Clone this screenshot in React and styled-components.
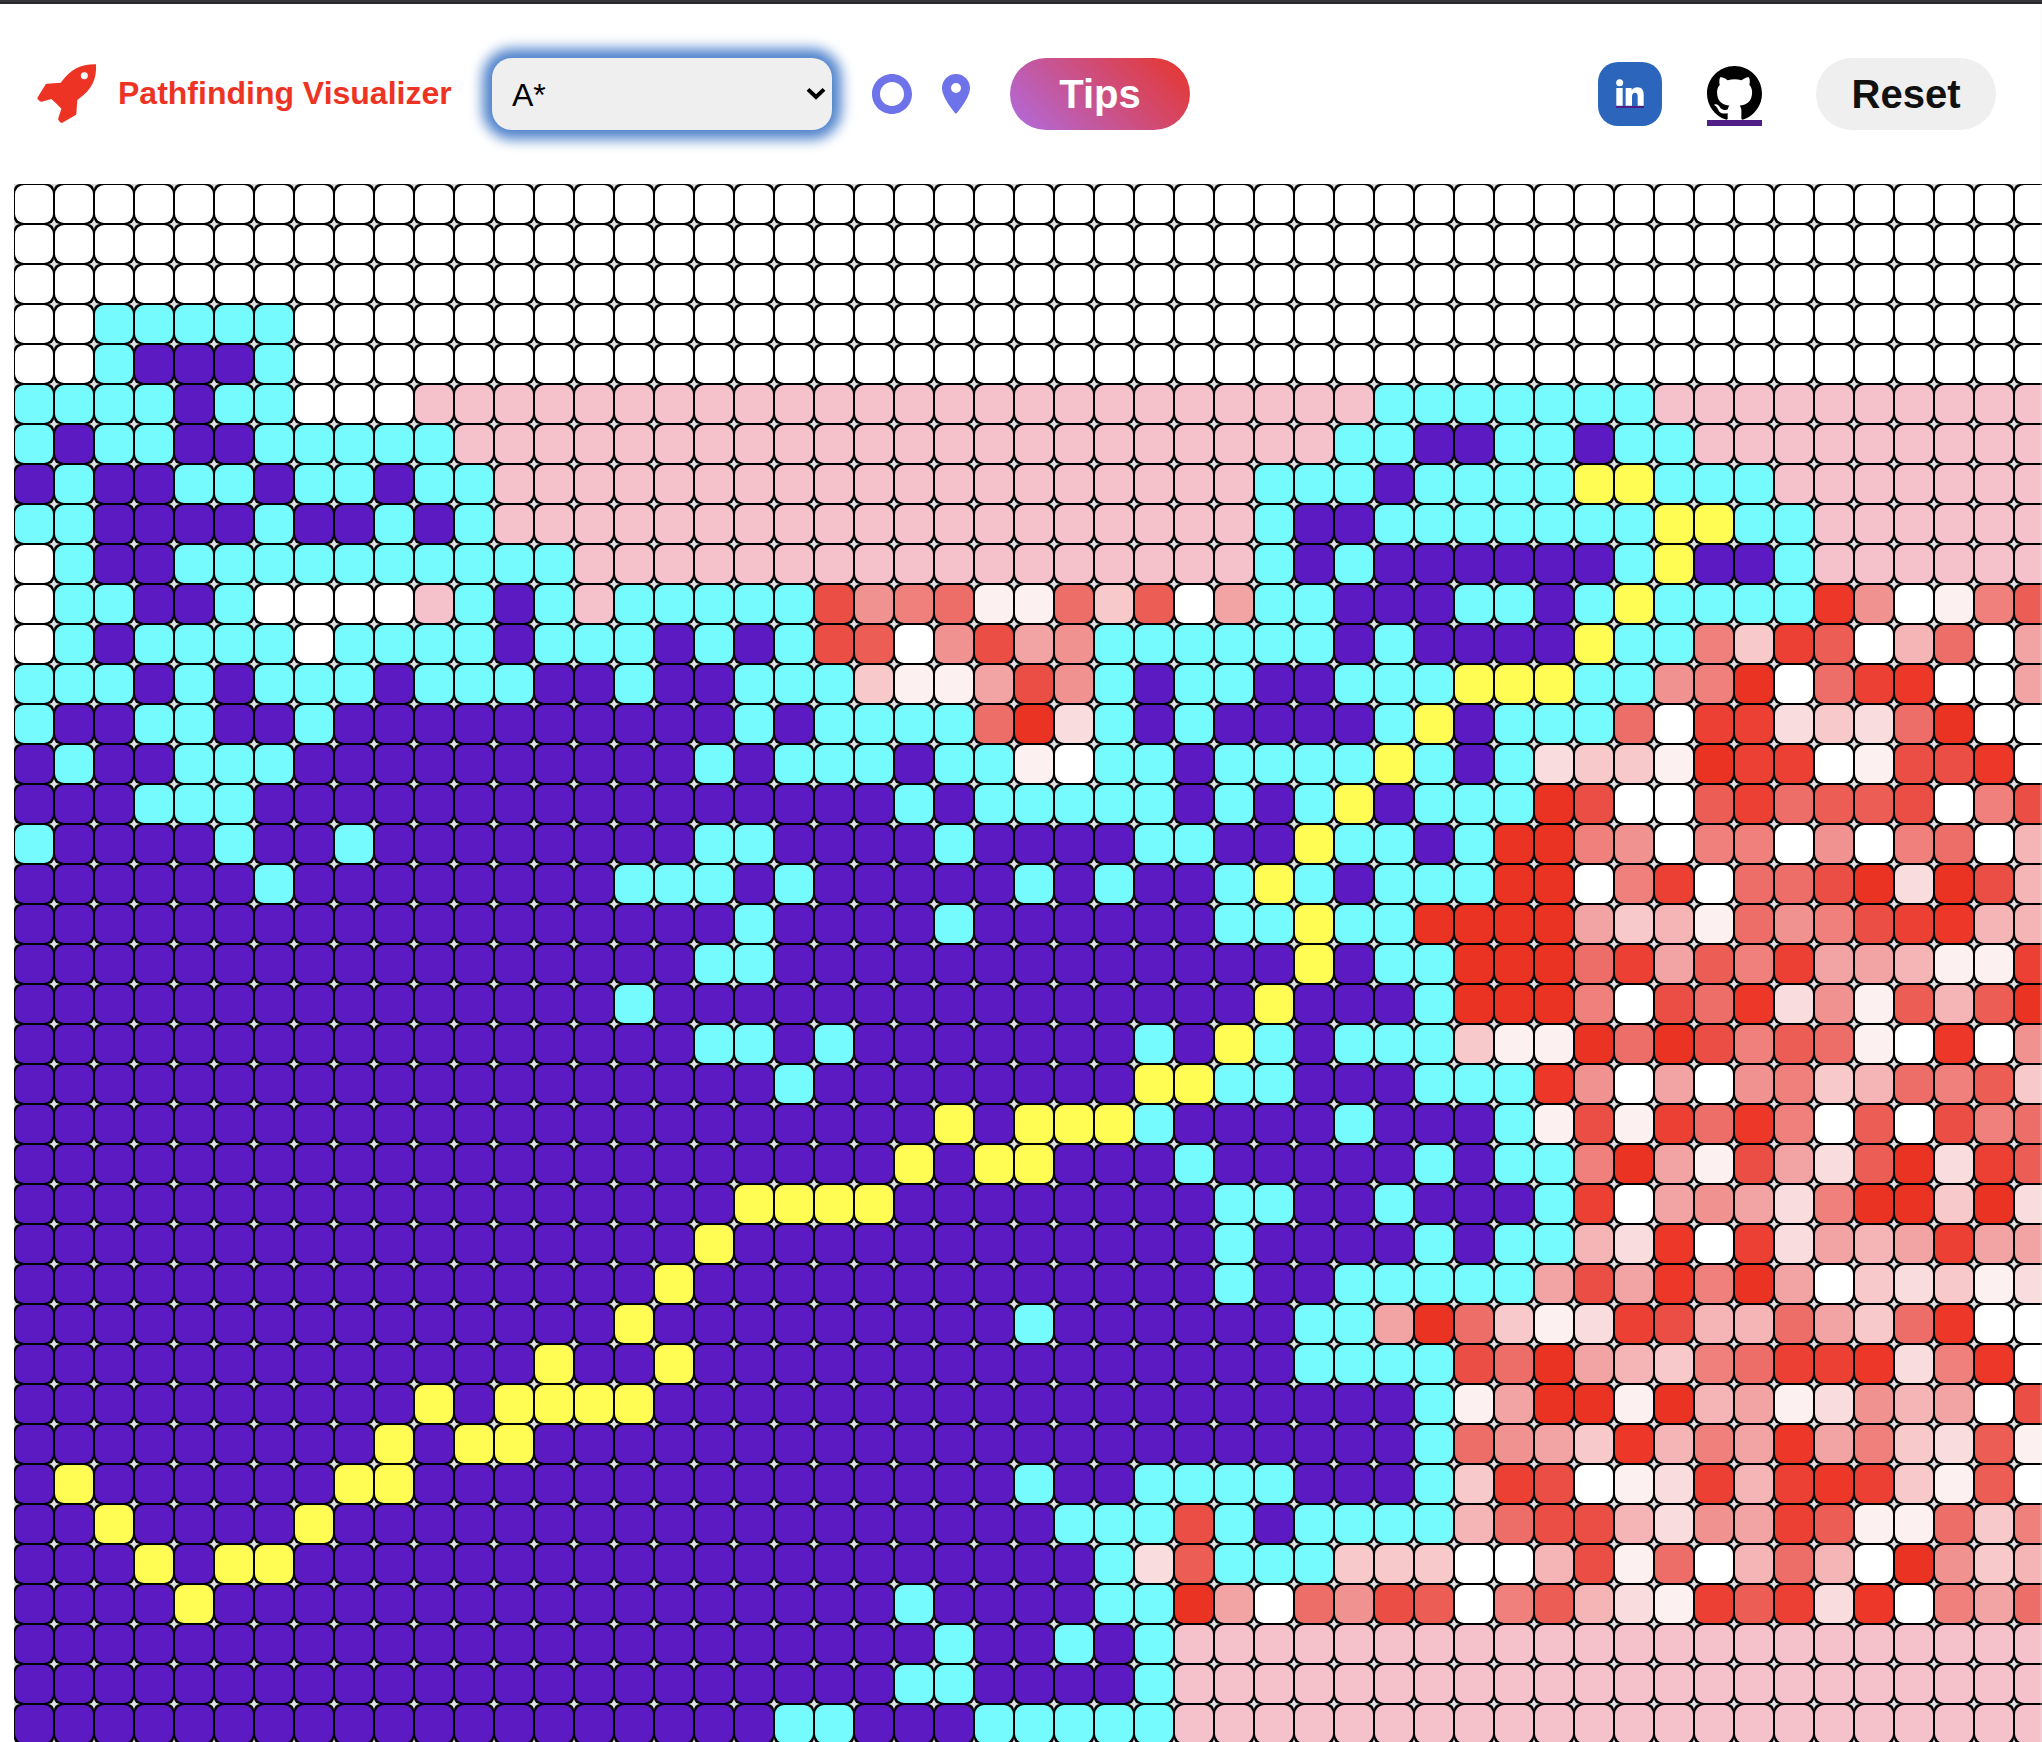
import React from "react";
import styled, { createGlobalStyle } from "styled-components";
import { BsGithub } from "react-icons/bs";
import { MdLocationOn, MdTripOrigin } from "react-icons/md";

const GlobalStyle = createGlobalStyle`
  * { box-sizing: border-box; }
  html, body { margin: 0; padding: 0; background: #ffffff; overflow: hidden; }
  body { font-family: "Liberation Sans", Arial, Helvetica, sans-serif; }
`;

const Page = styled.div`
  width: 100vw;
  height: 100vh;
  overflow: hidden;
  background: #ffffff;
`;

const TopEdge = styled.div`
  height: 4px;
  background: #37343b;
  border-bottom: 2px solid #29282c;
`;

const Header = styled.header`
  height: 180px;
  padding: 0 46px 0 37px;
  display: flex;
  align-items: center;
`;

const Brand = styled.div`
  display: flex;
  align-items: center;
  gap: 21px;
  color: #ed3424;
`;

const Title = styled.h1`
  margin: 0;
  width: 334px;
  padding-bottom: 2px;
  font-size: 32px;
  line-height: 36px;
  font-weight: 700;
  white-space: nowrap;
`;

const SelectBox = styled.div`
  width: 340px;
  height: 72px;
  margin-left: 40px;
  padding: 0 6px 0 20px;
  display: flex;
  align-items: center;
  background: #efefef;
  border-radius: 20px;
  box-shadow: 0 0 13px 9.5px #5083cc;
`;

const AlgorithmSelect = styled.select`
  flex: 1;
  height: 72px;
  padding: 1px 0 0;
  border: 0;
  outline: 0;
  appearance: none;
  background: transparent;
  color: #000000;
  font-family: inherit;
  font-size: 32px;
`;

const Tools = styled.div`
  display: flex;
  gap: 16px;
  margin: 0 30px 0 36px;
  color: #6f73ea;
  font-size: 48px;

  svg { display: block; }
`;

const PillButton = styled.button`
  width: 180px;
  height: 72px;
  padding: 0;
  border: 0;
  border-radius: 36px;
  background: ${(p) => p.$background};
  color: ${(p) => p.$color};
  font-family: inherit;
  font-size: 40px;
  font-weight: 700;
`;

const Actions = styled.div`
  margin-left: auto;
  display: flex;
  align-items: center;
`;

const LinkedInLink = styled.a`
  width: 64px;
  height: 64px;
  margin-right: 44.5px;
  display: flex;
  align-items: center;
  justify-content: center;
  border-radius: 20px;
  background: #2b66bc;
  color: #ffffff;

  span {
    display: block;
    height: 29px;
    margin-bottom: 1px;
    border-bottom: 2px solid #4f1f87;
  }

  svg { display: block; }
`;

const GithubLink = styled.a`
  width: 55px;
  height: 60px;
  margin: 4px 54.5px 0 0;
  border-bottom: 6px solid #4f1f87;
  color: #000000;

  svg { display: block; width: 55px; height: 55px; }
`;

const Board = styled.main`
  margin-left: 14px;
  height: 1558px;
  overflow: hidden;
  background: #e0dfe3;
`;

const Row = styled.div`
  display: flex;
  width: 2040px;
  height: 40px;
`;

const Cell = styled.div`
  width: 40px;
  height: 40px;
  padding: 1px;
  border-radius: 6px;
  background: #000000;

  &::before {
    content: "";
    display: block;
    height: 100%;
    border-radius: 9px;
    background: ${(p) => p.$fill};
  }
`;

const RightEdge = styled.div`
  position: fixed;
  top: 4px;
  right: 0;
  width: 2px;
  height: 100%;
  background: rgba(245, 245, 245, 0.25);
`;

const FILLS = {
  v: "#5b1ac2",
  c: "#75fbfd",
  y: "#fffd54",
  p: "#f5c2cb",
  0: "#ffffff",
  1: "#fcf0f0",
  2: "#f9dcdd",
  3: "#f7c9ca",
  4: "#f5b5b6",
  5: "#f2a3a3",
  6: "#f09290",
  7: "#ef807b",
  8: "#ed6e68",
  9: "#ec5d56",
  A: "#eb4e45",
  B: "#ec4035",
  C: "#ec3729",
  D: "#eb3323",
};

// Each row is a list of tokens: plain cell codes, or "code*count" for a run.
const ROWS = [
  "0*51",
  "0*51",
  "0*51",
  "00 c*5 0*44",
  "00cvvvc 0*44",
  "ccccvcc000 p*24 c*7 p*10",
  "cvccvvccccc p*22 ccvvccvcc p*9",
  "vcvvccvccvcc p*19 cccvccccyyccc p*7",
  "ccvvvvcvvcvc p*19 cvvcccccccyycc p*6",
  "0cvv c*10 p*17 cvcvvvvvvcyvvc p*6",
  "0ccvvc0000pcvcpccccc A6781183905 ccvvvccvcyccccC60179",
  "0cvcccc0ccccvcccvcvc A906A56 ccccccvcvvvvycc73B904805",
  "cccvcvcccvcccvvcvvccc 3115A6 cvccvvcccyyycc 67D08BC005",
  "cvvccvvc v*10 cv cccc 8D2 cvc vvvv cyvccc 80BB2328D00",
  "vcvvccc v*10 cvcccvcc 10 cc v cccc ycvc 2331DBB01AAC0",
  "vvvccc v*16 cv ccccc vcvcyv ccc DA009B899A07A",
  "cvvvvcvvc v*8 cc vvvv c vvvv cc vv y cc vc DD760770607804",
  "vvvvvvc v*8 cccvc vvvvv cvc vv cycv ccc DD07B088AD2DA4",
  "v*18 c vvvv c v*6 cc y cc DDDD 5341867ABC44",
  "v*17 cc v*13 yv cc DDD 8B597B55411B",
  "v*15 c v*15 y vvv c DDD 70A8C261949D",
  "v*17 ccvc v*7 cvycvccc 311D8DA79810C06",
  "v*19 c v*8 yycc vvv ccc C605067348793",
  "v*23 yvyyyc vvvv c vvv c 1A1B8C7090A78",
  "v*22 yvyyvvvc v*5 cvcc 7D51A529D2B9",
  "v*18 yyyy v*8 ccvvcvvvc B056527DD3D2",
  "v*17 y v*12 c vvvv cvcc 42C0B2545B55",
  "v*16 y v*13 cvv c*5 5A5C7D5032312",
  "v*15 y v*9 c v*6 cc 5D8312BA448538C00",
  "v*13 yvvy v*15 cccc A8D54378BBC27C0",
  "v*10 yvyyyy v*19 c 15DD1D45126450A",
  "v*9 yvyy v*22 c 8653C475C573291",
  "vy v*6 yy v*15 cvvccccvvvc 3BA012B4BCB3190",
  "vvyvvvvy v*18 cccAcvcccc 48AA4265B911837",
  "vvvyvyy v*20 c29ccc 333004A1804840D634",
  "vvvvy v*17 cvvvvcc D5086A9079421B9B2C0758",
  "v*23 cvvcvc p*22",
  "v*22 ccvvvvc p*22",
  "v*19 ccvvv c*5 p*22",
].map((row) =>
  row
    .split(" ")
    .map((token) => {
      const [code, count] = token.split("*");
      return count ? code.repeat(Number(count)) : code;
    })
    .join("")
);

function RocketIcon() {
  return (
    <svg width="60" height="59.3" viewBox="0 0 180 178" aria-hidden="true">
      <path
        fill="currentColor"
        fillRule="evenodd"
        d="M177 1 C180 45 165 78 121 108 L118 150 Q118 152 116 153 L76 176 Q72 178 69 174 L64 168 Q63 166 64 162 L73 134 Q61 121 43 105 L14 113 Q11 114 8 111 L2 106 Q0 103 2 100 L26 61 Q27 59 30 59 L71 56 C103 14 133 0 177 1 Z M142 25 A10.5 10.5 0 1 0 142 46 A10.5 10.5 0 1 0 142 25 Z"
      />
    </svg>
  );
}

function LinkedInMark() {
  return (
    <svg width="28" height="27" viewBox="0 0 84 81" aria-hidden="true">
      <circle cx="11" cy="11" r="10.5" fill="currentColor" />
      <path
        fill="currentColor"
        d="M1 27 H20 V80 H1 Z M29 27 H47 V34 C50 28 57 25 64 25 C78 25 83 34 83 48 V80 H65 V53 C65 45 63 41 57 41 C51 41 48 45 48 53 V80 H29 Z"
      />
    </svg>
  );
}

function Chevron() {
  return (
    <svg width="20" height="14" viewBox="0 0 20 14" aria-hidden="true">
      <path d="M2 2.4 L10 10 L18 2.4" fill="none" stroke="#000000" strokeWidth="4" />
    </svg>
  );
}

export default function App() {
  return (
    <Page>
      <GlobalStyle />
      <TopEdge />
      <Header>
        <Brand>
          <RocketIcon />
          <Title>Pathfinding Visualizer</Title>
        </Brand>
        <SelectBox>
          <AlgorithmSelect defaultValue="astar" aria-label="Algorithm">
            <option value="astar">A*</option>
          </AlgorithmSelect>
          <Chevron />
        </SelectBox>
        <Tools>
          <MdTripOrigin />
          <MdLocationOn />
        </Tools>
        <PillButton $background="linear-gradient(45deg, #b06be0, #e7352a)" $color="#ffffff">
          Tips
        </PillButton>
        <Actions>
          <LinkedInLink href="#linkedin" aria-label="LinkedIn">
            <span>
              <LinkedInMark />
            </span>
          </LinkedInLink>
          <GithubLink href="#github" aria-label="GitHub">
            <BsGithub />
          </GithubLink>
          <PillButton $background="#efefef" $color="#111111">
            Reset
          </PillButton>
        </Actions>
      </Header>
      <Board>
        {ROWS.map((row, r) => (
          <Row key={r}>
            {[...row].map((code, c) => (
              <Cell key={c} $fill={FILLS[code]} />
            ))}
          </Row>
        ))}
      </Board>
      <RightEdge />
    </Page>
  );
}
